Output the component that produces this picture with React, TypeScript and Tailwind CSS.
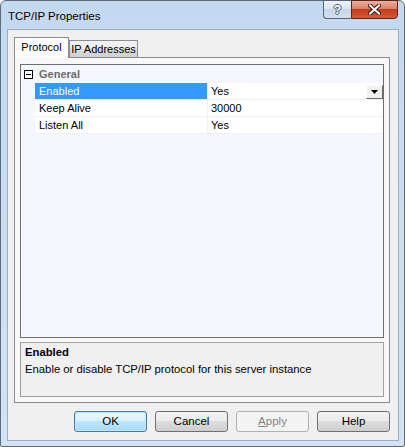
import React from "react";

const rows = [
  { name: "Enabled", value: "Yes", selected: true },
  { name: "Keep Alive", value: "30000", selected: false },
  { name: "Listen All", value: "Yes", selected: false },
];

function DialogButton({
  label,
  primary,
  disabled,
}: {
  label: React.ReactNode;
  primary?: boolean;
  disabled?: boolean;
}) {
  let cls =
    "border-[#707070] bg-[linear-gradient(to_bottom,#f2f2f2_0%,#ebebeb_50%,#dddddd_50%,#cfcfcf_100%)] text-black";
  if (primary)
    cls =
      "border-[#3c7fb1] bg-[linear-gradient(to_bottom,#eaf6fd_0%,#d9f0fc_50%,#bee6fd_50%,#a7d9f5_100%)] text-black shadow-[inset_0_0_0_1px_#c6e7fa]";
  if (disabled) cls = "border-[#adb2b5] bg-[#f4f4f4] text-[#838383]";
  return (
    <button
      className={`flex h-[21px] w-[73px] items-center justify-center rounded-[3px] border text-[11.5px] ${cls}`}
    >
      {label}
    </button>
  );
}

export default function App() {
  return (
    <div
      className="h-[447px] w-[405px] bg-white"
      style={{ fontFamily: '"Liberation Sans", Arial, sans-serif' }}
    >
      <div className="flex h-[447px] w-[405px] flex-col rounded-t-[6px] rounded-b-[2px] border border-[#5f6b78] bg-[linear-gradient(to_bottom,#c3d9f0,#d2e3f5)]">
        {/* Title bar */}
        <div className="flex h-[28px] shrink-0 items-start justify-between">
          <div className="pl-[7px] pt-[7px] text-[11.5px] text-black">
            TCP/IP Properties
          </div>
          <div className="-mt-px mr-[6px] flex h-[19px]">
            <div className="flex w-[28px] items-center justify-center rounded-bl-[4px] border border-r-0 border-[#56657a] bg-[linear-gradient(to_bottom,#eef3f9_0%,#dbe5f1_45%,#c7d5e6_50%,#d4e0ee_100%)]">
              <span className="text-[13px] font-bold leading-none text-white [text-shadow:1px_0_#4a5a6e,-1px_0_#4a5a6e,0_1px_#4a5a6e,0_-1px_#4a5a6e]">
                ?
              </span>
            </div>
            <div className="flex w-[47px] items-center justify-center rounded-br-[4px] border border-[#5a2418] bg-[linear-gradient(to_bottom,#ebb0a2_0%,#dc806b_45%,#c43d20_50%,#d35a36_100%)]">
              <svg width="13" height="11" viewBox="0 0 13 11">
                <path
                  d="M2 1.5 L11 9.5 M11 1.5 L2 9.5"
                  stroke="#3b1a14"
                  strokeWidth="4"
                  strokeLinecap="square"
                />
                <path
                  d="M2 1.5 L11 9.5 M11 1.5 L2 9.5"
                  stroke="#ffffff"
                  strokeWidth="2"
                  strokeLinecap="square"
                />
              </svg>
            </div>
          </div>
        </div>

        {/* Client area */}
        <div className="mb-[5px] ml-[6px] mr-[5px] flex flex-1 flex-col border border-[#9aaec4] bg-[#f0f0f0] pl-[6px] pr-[8px] pt-[7px] pb-[8px]">
          {/* Tabs */}
          <div className="flex h-[20px] shrink-0 items-end whitespace-nowrap text-[11px]">
            <div className="relative z-10 -mb-px flex h-[21px] w-[55px] shrink-0 items-center justify-center border-x border-t border-[#898c95] bg-white pb-[2px]">
              Protocol
            </div>
            <div className="flex h-[17px] w-[69px] shrink-0 items-center justify-center border-x border-t border-[#898c95] bg-[linear-gradient(to_bottom,#f2f2f2_0%,#ebebeb_50%,#dddddd_50%,#cfcfcf_100%)]">
              IP Addresses
            </div>
          </div>

          {/* Tab page */}
          <div className="flex flex-1 flex-col gap-[4px] border border-[#898c95] bg-[#f8f8f8] px-[5px] pt-[6px] pb-[5px]">
            {/* Property grid */}
            <div className="flex flex-1 flex-col border border-[#6f6f6f] bg-[#f4f7fc] text-[11px]">
              <div className="flex h-[18px] items-center">
                <div className="flex w-[14px] justify-center">
                  <div className="flex h-[9px] w-[9px] items-center justify-center border border-black bg-white">
                    <div className="h-px w-[5px] bg-black" />
                  </div>
                </div>
                <div className="pl-[4px] font-bold text-[#6d6d6d]">General</div>
              </div>
              {rows.map((r) => (
                <div key={r.name} className="flex h-[17px]">
                  <div className="w-[14px]" />
                  <div className="flex flex-1 border-b border-[#f0f0f0]">
                    <div
                      className={`flex w-[172px] items-center pl-[4px] ${
                        r.selected ? "bg-[#3399ff] text-white" : "bg-white text-black"
                      }`}
                    >
                      {r.name}
                    </div>
                    <div className="w-px bg-[#f0f0f0]" />
                    <div className="flex flex-1 items-center justify-between bg-white pl-[3px]">
                      <span>{r.value}</span>
                      {r.selected && (
                        <div className="mt-[2px] flex h-[14px] w-[17px] items-center justify-center border border-t-white border-l-white border-b-[#696969] border-r-[#696969] bg-[#f0f0f0]">
                          <svg width="7" height="4" viewBox="0 0 7 4">
                            <path d="M0 0 H7 L3.5 4 Z" fill="#000" />
                          </svg>
                        </div>
                      )}
                    </div>
                  </div>
                </div>
              ))}
            </div>

            {/* Description */}
            <div className="h-[55px] shrink-0 border border-[#a0a0a0] bg-[#f0f0f0] pl-[4px] pt-[1px] text-[11.3px] leading-[17px] text-black">
              <div className="font-bold">Enabled</div>
              <div>Enable or disable TCP/IP protocol for this server instance</div>
            </div>
          </div>

          {/* Buttons */}
          <div className="mt-[8px] flex shrink-0 justify-end gap-[8px]">
            <DialogButton label="OK" primary />
            <DialogButton label="Cancel" />
            <DialogButton
              label={
                <span>
                  <span className="underline">A</span>pply
                </span>
              }
              disabled
            />
            <DialogButton label="Help" />
          </div>
        </div>
      </div>
    </div>
  );
}
